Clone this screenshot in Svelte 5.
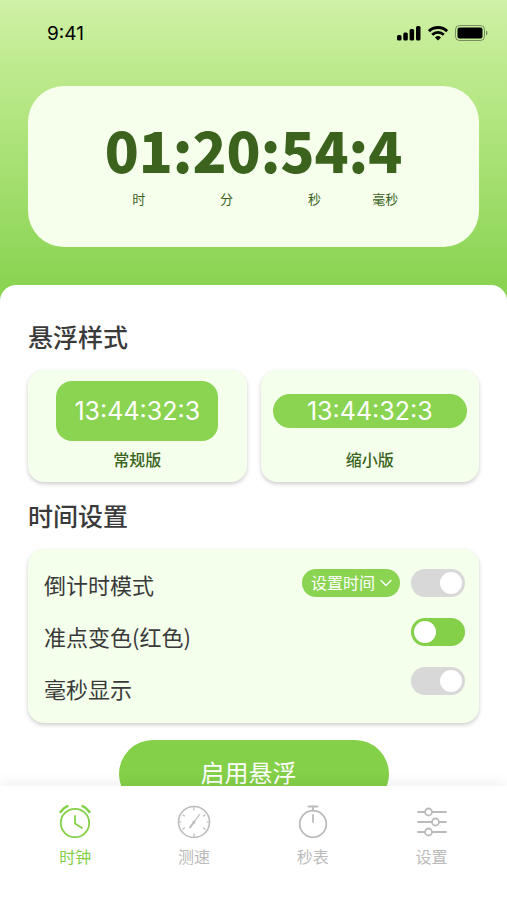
<script>
  const parts = [
    { value: '01', unit: '时' },
    { value: '20', unit: '分' },
    { value: '54', unit: '秒' },
    { value: '4', unit: '毫秒' }
  ];

  const styles = [
    { id: 'normal', name: '常规版' },
    { id: 'small', name: '缩小版' }
  ];

  const preview = '13:44:32:3';

  let settings = $state([
    { id: 'countdown', label: '倒计时模式', on: false, picker: true },
    { id: 'color', label: '准点变色(红色)', on: true },
    { id: 'millis', label: '毫秒显示', on: false }
  ]);

  const tabs = [
    { id: 'clock', name: '时钟' },
    { id: 'speed', name: '测速' },
    { id: 'stopwatch', name: '秒表' },
    { id: 'settings', name: '设置' }
  ];

  let selectedStyle = $state('normal');
  let activeTab = $state('clock');
</script>

<div class="app">
  <main>
    <header>
      <div class="status-bar">
        <span>9:41</span>
        <div class="status-icons">
          <svg width="24" height="16" viewBox="0 0 24 16">
            <rect x="0" y="10" width="4.500" height="5.500" rx="1.500" />
            <rect x="6.300" y="7.500" width="4.500" height="8" rx="1.500" />
            <rect x="12.600" y="4" width="4.500" height="11.500" rx="1.500" />
            <rect x="19" y="1" width="4.500" height="14.500" rx="1.500" />
          </svg>
          <svg width="20" height="16" viewBox="0 0 20 16">
            <g fill="none" stroke="#000" stroke-width="2.8">
              <path d="M0.9 6.2a13 13 0 0 1 18.2 0" />
              <path d="M4.2 9.8a8.3 8.3 0 0 1 11.6 0" />
            </g>
            <path d="M10 15.500l-3-3a4.3 4.3 0 0 1 6 0z" />
          </svg>
          <svg width="33" height="16" viewBox="0 0 33 16">
            <rect x="0.5" y="0.5" width="29" height="15" rx="4" fill="none" stroke="#000" stroke-opacity="0.4" />
            <rect x="2.5" y="2.5" width="25" height="11" rx="2" />
            <path d="M31 5.5c2 .8 2 4.200 0 5z" opacity="0.4" />
          </svg>
        </div>
      </div>

      <div class="clock">
        {#each parts as part, i}
          {#if i > 0}
            <span class="digits">:</span>
          {/if}
          <div class="part">
            <span class="digits">{part.value}</span>
            <span class="unit">{part.unit}</span>
          </div>
        {/each}
      </div>
    </header>

    <div class="sheet">
      <h2>悬浮样式</h2>
      <div class="styles">
        {#each styles as item}
          <button class="style-card {item.id}" aria-pressed={selectedStyle === item.id} onclick={() => (selectedStyle = item.id)}>
            <span class="preview">{preview}</span>
            <span class="style-name">{item.name}</span>
          </button>
        {/each}
      </div>

      <h2>时间设置</h2>
      <div class="panel">
        <div class="labels">
          {#each settings as setting}
            <label for={setting.id}>{setting.label}</label>
          {/each}
        </div>
        <div class="controls">
          {#each settings as setting}
            <div class="control">
              {#if setting.picker}
                <div class="picker">
                  <select aria-label="设置时间">
                    <option>设置时间</option>
                    <option>5分钟</option>
                    <option>10分钟</option>
                  </select>
                  <svg width="12" height="8" viewBox="0 0 12 8">
                    <path d="M1 1.500l5 5 5-5" fill="none" stroke="#fff" stroke-width="1.3" stroke-linecap="round" />
                  </svg>
                </div>
              {/if}
              <input type="checkbox" class="toggle" id={setting.id} bind:checked={setting.on} />
            </div>
          {/each}
        </div>
      </div>

      <button class="start">启用悬浮</button>
    </div>
  </main>

  <nav>
    {#each tabs as tab}
      <button class="tab" class:active={activeTab === tab.id} onclick={() => (activeTab = tab.id)}>
        <svg width="34" height="34" viewBox="0 0 34 34" fill="none" stroke="currentColor" stroke-width="1.8" stroke-linecap="round">
          {#if tab.id === 'clock'}
            <circle cx="17" cy="19" r="14.200" />
            <path d="M17 12v7.500l7 4.500" stroke-linejoin="round" />
            <path d="M2.500 8a14 14 0 0 1 7-5.800M31.500 8a14 14 0 0 0-7-5.800" stroke-width="2.4" />
          {:else if tab.id === 'speed'}
            <circle cx="17" cy="18" r="15.500" stroke-width="1.6" />
            <path d="M17 3v3M17 30v3M2 18h2M30 18h2M6 11l1.500 1M28 11l-1.500 1M6 25l1.500-1M28 25l-1.500-1" stroke-width="1.2" />
            <path d="M17 18l5.500-7.500" stroke-width="1.2" />
            <path d="M17 18l-4 5.500" stroke-width="2" />
            <circle cx="17" cy="18" r="1.500" fill="currentColor" stroke="none" />
          {:else if tab.id === 'stopwatch'}
            <circle cx="17" cy="20" r="13.300" />
            <path d="M12.500 2.500h9M17 2.500v4M17 11v7" />
          {:else}
            <path d="M3 8h7M17 8h14M3 18h14M24 18h7M3 28h7M17 28h14" />
            <circle cx="13.500" cy="8" r="3.500" />
            <circle cx="20.500" cy="18" r="3.500" />
            <circle cx="13.500" cy="28" r="3.500" />
          {/if}
        </svg>
        {tab.name}
      </button>
    {/each}
  </nav>
</div>

<style>
  :global(body) {
    margin: 0;
  }

  .app {
    display: flex;
    flex-direction: column;
    height: 100vh;
    background: #fff;
    font-family: "Noto Sans CJK SC", sans-serif;
    color: #3a3a3a;
  }

  button,
  select {
    border: none;
    padding: 0;
    margin: 0;
    font-family: inherit;
    cursor: pointer;
  }

  main {
    flex: 1;
    min-height: 0;
    display: flex;
    flex-direction: column;
    overflow-y: auto;
    scrollbar-width: none;
    background: linear-gradient(#cff1a8, #c0eb90 60px, #8ad452 285px);
  }

  header {
    padding: 0 28px 38px;
  }

  /* Status bar */
  .status-bar {
    display: flex;
    align-items: center;
    justify-content: space-between;
    height: 66px;
    margin-bottom: 20px;
    padding-left: 19px;
    font-family: Inter, sans-serif;
    font-size: 19px;
    color: #000;
  }

  .status-icons {
    display: flex;
    gap: 7px;
    margin-right: -9px;
  }

  /* Main clock */
  .clock {
    display: flex;
    justify-content: center;
    align-items: flex-start;
    box-sizing: border-box;
    min-height: 161px;
    padding-top: 31px;
    border-radius: 36px;
    background: #f6ffec;
    color: #3b631d;
  }

  .part {
    display: flex;
    flex-direction: column;
    align-items: center;
    gap: 6px;
  }

  .digits {
    font-size: 56px;
    font-weight: 900;
    line-height: 64px;
  }

  .unit {
    font-size: 13px;
    line-height: 24px;
  }

  /* White sheet */
  .sheet {
    flex: 1 0 auto;
    padding: 34px 28px 24px;
    border-radius: 16px 16px 0 0;
    background: #fff;
  }

  h2 {
    margin: 0 0 17px;
    font-size: 25px;
    font-weight: 500;
    line-height: 34px;
  }

  .styles {
    display: grid;
    grid-template-columns: 1fr 1fr;
    gap: 14px;
    margin-bottom: 16px;
  }

  .style-card {
    display: flex;
    flex-direction: column;
    align-items: center;
    justify-content: space-between;
    height: 112px;
    padding: 11px 12px;
    border-radius: 16px;
    background: #f4ffec;
    box-shadow: 0 2px 4px rgba(0, 0, 0, 0.2);
  }

  .preview {
    display: flex;
    align-items: center;
    justify-content: center;
    border-radius: 16px;
    background: #8ad452;
    color: #fff;
    font-family: Inter, sans-serif;
    font-size: 25px;
  }

  .normal .preview {
    height: 60px;
    padding: 0 18px;
  }

  .small .preview {
    width: 100%;
    height: 34px;
    margin-top: 13px;
    border-radius: 17px;
  }

  .style-name {
    font-size: 16px;
    font-weight: 500;
    line-height: 24px;
    color: #3b631d;
  }

  /* Settings */
  .panel {
    display: flex;
    justify-content: space-between;
    padding: 20px 14px 20px 16px;
    border-radius: 16px;
    background: #f4ffec;
    box-shadow: 0 2px 4px rgba(0, 0, 0, 0.2);
  }

  .labels {
    display: flex;
    flex-direction: column;
    gap: 22px;
  }

  label {
    font-size: 22px;
    line-height: 30px;
  }

  .controls {
    display: flex;
    flex-direction: column;
    gap: 19px;
  }

  .control {
    display: flex;
    align-items: center;
    justify-content: flex-end;
    gap: 11px;
    height: 28px;
  }

  .control + .control {
    margin-top: 2px;
  }

  .picker {
    display: grid;
    align-items: center;
  }

  .picker > * {
    grid-area: 1 / 1;
  }

  .picker svg {
    justify-self: end;
    margin-right: 8px;
    pointer-events: none;
  }

  select {
    appearance: none;
    height: 28px;
    padding: 0 24px 2px 9px;
    border-radius: 14px;
    background: #8ad452;
    color: #fff;
    font-size: 16px;
  }

  .toggle {
    appearance: none;
    display: flex;
    justify-content: flex-end;
    box-sizing: border-box;
    width: 54px;
    height: 28px;
    margin: 0;
    padding: 3px;
    border-radius: 14px;
    background: #d8d8d8;
    cursor: pointer;
  }

  .toggle::before {
    content: '';
    width: 22px;
    height: 22px;
    border-radius: 50%;
    background: #fff;
  }

  .toggle:checked {
    justify-content: flex-start;
    background: #84d048;
  }

  .start {
    display: block;
    min-width: 270px;
    height: 68px;
    margin: 17px auto 0;
    padding: 0 10px 6px 0;
    border-radius: 34px;
    background: #84d048;
    color: #fff;
    font-size: 24px;
  }

  /* Tab bar */
  nav {
    display: grid;
    grid-template-columns: repeat(4, 1fr);
    padding: 18px 16px 32px;
    background: #fff;
    box-shadow: 0 -4px 12px rgba(0, 0, 0, 0.06);
  }

  .tab {
    display: flex;
    flex-direction: column;
    align-items: center;
    gap: 6px;
    background: none;
    color: #bbb;
    font-size: 16px;
    line-height: 24px;
  }

  .tab.active {
    color: #84d048;
  }
</style>
